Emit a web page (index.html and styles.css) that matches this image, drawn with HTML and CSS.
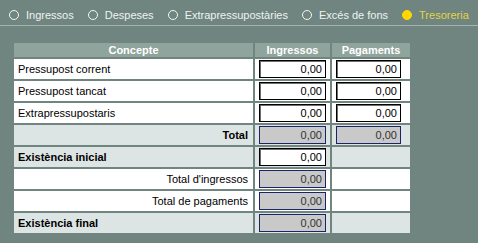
FILE: index.html
```html
<!DOCTYPE html>
<html lang="ca">
<head>
<meta charset="utf-8">
<title>Tresoreria</title>
<link rel="stylesheet" href="styles.css">
</head>
<body>
<nav class="tabs">
  <span class="tab"><span class="radio"></span>Ingressos</span>
  <span class="tab"><span class="radio"></span>Despeses</span>
  <span class="tab"><span class="radio"></span>Extrapressupostàries</span>
  <span class="tab"><span class="radio"></span>Excés de fons</span>
  <span class="tab tab-active"><span class="radio radio-on"></span>Tresoreria</span>
</nav>
<table class="grid">
  <colgroup><col class="c-con"><col class="c-ing"><col class="c-pag"></colgroup>
  <thead>
    <tr><th>Concepte</th><th>Ingressos</th><th>Pagaments</th></tr>
  </thead>
  <tbody>
    <tr>
      <td class="lbl">Pressupost corrent</td>
      <td class="fld"><input class="in w-ing" value="0,00"></td>
      <td class="fld"><input class="in w-pag" value="0,00"></td>
    </tr>
    <tr>
      <td class="lbl">Pressupost tancat</td>
      <td class="fld"><input class="in w-ing" value="0,00"></td>
      <td class="fld"><input class="in w-pag" value="0,00"></td>
    </tr>
    <tr>
      <td class="lbl">Extrapressupostaris</td>
      <td class="fld"><input class="in w-ing" value="0,00"></td>
      <td class="fld"><input class="in w-pag" value="0,00"></td>
    </tr>
    <tr class="alt">
      <td class="lbl right bold">Total</td>
      <td class="fld"><input class="in ro w-ing" value="0,00" readonly></td>
      <td class="fld"><input class="in ro w-pag" value="0,00" readonly></td>
    </tr>
    <tr class="alt">
      <td class="lbl bold">Existència inicial</td>
      <td class="fld"><input class="in w-ing" value="0,00"></td>
      <td class="fld"></td>
    </tr>
    <tr>
      <td class="lbl right">Total d'ingressos</td>
      <td class="fld"><input class="in ro w-ing" value="0,00" readonly></td>
      <td class="fld"></td>
    </tr>
    <tr>
      <td class="lbl right">Total de pagaments</td>
      <td class="fld"><input class="in ro w-ing" value="0,00" readonly></td>
      <td class="fld"></td>
    </tr>
    <tr class="alt">
      <td class="lbl bold">Existència final</td>
      <td class="fld"><input class="in ro w-ing" value="0,00" readonly></td>
      <td class="fld"></td>
    </tr>
  </tbody>
</table>
</body>
</html>
```

FILE: styles.css
```css
html, body {
  margin: 0;
  padding: 0;
  background: #70857f;
  font-family: "Liberation Sans", Arial, sans-serif;
  font-size: 11px;
}

.tabs {
  display: flex;
  align-items: center;
  height: 21px;
  padding: 4px 0 0 9px;
  border-bottom: 1px solid #a3b4ae;
  color: #eef3f2;
}

.tab {
  display: flex;
  align-items: center;
  margin-right: 14px;
  white-space: nowrap;
}

.radio {
  width: 10px;
  height: 10px;
  box-sizing: border-box;
  border: 1px solid #f2f6f5;
  border-radius: 50%;
  margin-right: 7px;
}

.radio-on {
  background: #ffd800;
  border-color: #ffd800;
}

.tab-active {
  color: #e2d447;
}

.grid {
  margin: 15px 0 0 12px;
  border-collapse: separate;
  border-spacing: 2px;
  table-layout: fixed;
  width: 400px;
}

.c-con { width: 239px; }
.c-ing { width: 75px; }
.c-pag { width: 78px; }

.grid th {
  background: #8fa49c;
  color: #ffffff;
  font-weight: bold;
  font-size: 11px;
  height: 14px;
  line-height: 14px;
  padding: 0;
  text-align: center;
}

.grid td {
  background: #ffffff;
  height: 20px;
  line-height: 14px;
  padding: 0;
  vertical-align: middle;
  box-sizing: border-box;
}

.grid tr.alt td {
  background: #dde5e4;
}

.lbl {
  padding: 0 5px 0 4px !important;
  color: #000000;
  white-space: nowrap;
}

.right { text-align: right; }
.bold { font-weight: bold; }

.fld {
  padding: 1px 0 1px 4px !important;
}

.in {
  display: block;
  box-sizing: border-box;
  height: 18px;
  margin: 0;
  padding: 0 3px;
  border: 1px solid #000000;
  box-shadow: inset 1px 1px 0 #6d6d6d;
  background: #ffffff;
  font-family: "Liberation Sans", Arial, sans-serif;
  font-size: 11px;
  color: #000000;
  text-align: right;
  outline: none;
}

.w-ing { width: 67px; }
.w-pag { width: 65px; }

.ro {
  background: #c9c9c9;
  border-color: #1b2466;
  box-shadow: none;
  color: #333333;
}
```
